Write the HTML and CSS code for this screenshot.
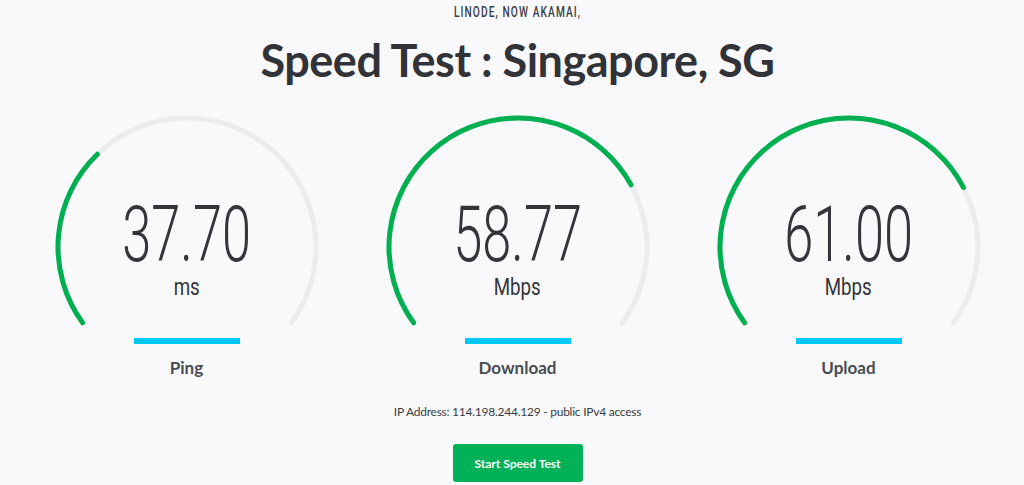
FILE: index.html
```html
<!DOCTYPE html>
<html lang="en">
<head>
<meta charset="utf-8">
<title>Speed Test : Singapore, SG</title>
<link rel="stylesheet" href="styles.css">
</head>
<body>
<main class="page">
  <p class="brand"><span class="cond">LINODE, NOW AKAMAI,</span></p>
  <h1 class="title">Speed Test : Singapore, SG</h1>

  <section class="gauges">
    <div class="meter">
      <div class="gauge">
        <svg class="dial" width="270" height="216" viewBox="0 0 270 216">
          <path class="track" d="M30.64 209.82 A129 129 0 1 1 239.36 209.82"/>
          <path class="fill" pathLength="100" stroke-dasharray="32.5 200" d="M30.64 209.82 A129 129 0 1 1 239.36 209.82"/>
        </svg>
        <div class="readout">
          <div class="value"><span class="cond-num">37.70</span></div>
          <div class="unit"><span class="cond-unit">ms</span></div>
        </div>
      </div>
      <div class="bar"></div>
      <div class="label">Ping</div>
    </div>

    <div class="meter">
      <div class="gauge">
        <svg class="dial" width="270" height="216" viewBox="0 0 270 216">
          <path class="track" d="M30.64 209.82 A129 129 0 1 1 239.36 209.82"/>
          <path class="fill" pathLength="100" stroke-dasharray="74.3 200" d="M30.64 209.82 A129 129 0 1 1 239.36 209.82"/>
        </svg>
        <div class="readout">
          <div class="value"><span class="cond-num">58.77</span></div>
          <div class="unit"><span class="cond-unit">Mbps</span></div>
        </div>
      </div>
      <div class="bar"></div>
      <div class="label">Download</div>
    </div>

    <div class="meter">
      <div class="gauge">
        <svg class="dial" width="270" height="216" viewBox="0 0 270 216">
          <path class="track" d="M30.64 209.82 A129 129 0 1 1 239.36 209.82"/>
          <path class="fill" pathLength="100" stroke-dasharray="74.8 200" d="M30.64 209.82 A129 129 0 1 1 239.36 209.82"/>
        </svg>
        <div class="readout">
          <div class="value"><span class="cond-num">61.00</span></div>
          <div class="unit"><span class="cond-unit">Mbps</span></div>
        </div>
      </div>
      <div class="bar"></div>
      <div class="label">Upload</div>
    </div>
  </section>

  <p class="ip">IP Address: 114.198.244.129 - public IPv4 access</p>
  <div class="actions">
    <button class="start" type="button">Start Speed Test</button>
  </div>
</main>
</body>
</html>
```

FILE: styles.css
```css
* { box-sizing: border-box; }

html, body {
  margin: 0;
  padding: 0;
  background: #f9f9fb;
  color: #35373b;
  font-family: "Lato", "Liberation Sans", sans-serif;
  overflow: hidden;
}

.page {
  width: 993px;
  margin-left: 21px;
  text-align: center;
}

.brand {
  margin: 0;
  height: 24px;
  font-family: "Roboto", "Liberation Sans", sans-serif;
  font-weight: 500;
  font-size: 15px;
  line-height: 24px;
  letter-spacing: 1.6px;
  color: #3c3e44;
}

.cond {
  display: inline-block;
  transform: scaleX(0.68);
}

.title {
  margin: 9px 0 0;
  font-family: "Lato", "Liberation Sans", sans-serif;
  font-weight: 700;
  font-size: 45px;
  line-height: 55px;
  letter-spacing: -0.5px;
  color: #313338;
}

.gauges {
  display: grid;
  grid-template-columns: repeat(3, 331px);
  margin-top: 25px;
}

.meter {
  display: flex;
  flex-direction: column;
  align-items: center;
}

.gauge {
  display: grid;
  justify-items: center;
}

.gauge > * {
  grid-area: 1 / 1;
}

.dial {
  display: block;
}

.track,
.fill {
  fill: none;
  stroke-width: 5;
  stroke-linecap: round;
}

.track { stroke: #ececef; }
.fill { stroke: #00b050; }

.readout {
  align-self: start;
  padding-top: 84px;
  font-family: "Roboto", "Liberation Sans", sans-serif;
  color: #33353a;
}

.value {
  font-weight: 300;
  font-size: 77px;
  line-height: 77px;
  height: 77px;
}

.cond-num {
  display: inline-block;
  transform: scaleX(0.68);
}

.unit {
  margin-top: 1px;
  font-weight: 400;
  font-size: 24px;
  line-height: 24px;
}

.cond-unit {
  display: inline-block;
  transform: scaleX(0.78);
}

.bar {
  width: 106px;
  height: 6px;
  margin-top: 9px;
  background: #00c8f5;
}

.label {
  margin-top: 14px;
  font-weight: 700;
  font-size: 17px;
  line-height: 20px;
  color: #4a4c51;
}

.ip {
  margin: 26px 0 0;
  font-size: 12px;
  line-height: 16px;
  letter-spacing: -0.25px;
  color: #3a3c40;
}

.actions {
  margin-top: 24px;
}

.start {
  width: 130px;
  height: 38px;
  border: 0;
  border-radius: 3px;
  background: #00b157;
  color: #ffffff;
  font-family: "Lato", "Liberation Sans", sans-serif;
  font-weight: 700;
  font-size: 12px;
  cursor: pointer;
}
```
